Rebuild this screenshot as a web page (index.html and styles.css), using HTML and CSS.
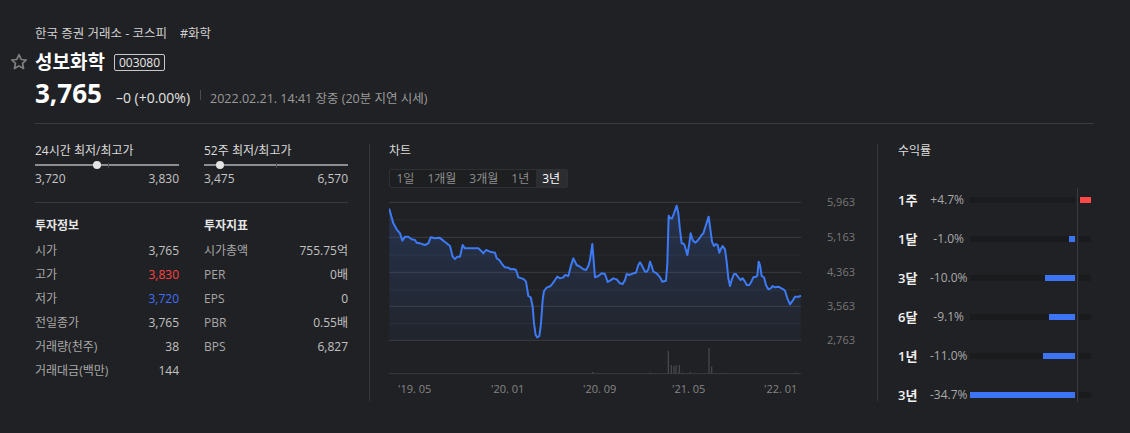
FILE: index.html
```html
<!DOCTYPE html>
<html lang="ko">
<head>
<meta charset="utf-8">
<title>성보화학</title>
<link rel="stylesheet" href="styles.css">
</head>
<body>
<div class="page">
  <header class="head">
    <div class="market"><span>한국 증권 거래소 - 코스피</span><span class="tag">#화학</span></div>
    <div class="name-row">
      <svg class="star" viewBox="0 0 24 24" width="18" height="18"><polygon points="12,2.2 14.9,8.6 21.7,9.3 16.7,13.9 18.1,20.7 12,17.2 5.9,20.7 7.3,13.9 2.3,9.3 9.1,8.6" fill="none" stroke="#808080" stroke-width="2.2" stroke-linejoin="round"/></svg>
      <h1 class="name">성보화학</h1>
      <span class="code">003080</span>
    </div>
    <div class="price-row">
      <span class="price">3,765</span>
      <span class="chg">–0 (+0.00%)</span>
      <span class="sep"></span>
      <span class="time">2022.02.21. 14:41 장중 (20분 지연 시세)</span>
    </div>
  </header>
  <div class="rule"></div>
  <main class="body">
    <section class="stats">
      <div class="range">
        <div class="sec-title">24시간 최저/최고가</div>
        <div class="slider"><span class="tick" style="left:73px"></span><span class="dot" style="left:62px"></span></div>
        <div class="range-vals"><span>3,720</span><span>3,830</span></div>
      </div>
      <div class="range">
        <div class="sec-title">52주 최저/최고가</div>
        <div class="slider"><span class="tick" style="left:72px"></span><span class="dot" style="left:16px"></span></div>
        <div class="range-vals"><span>3,475</span><span>6,570</span></div>
      </div>
      <div class="divider"></div>
      <div class="info">
        <div class="info-title">투자정보</div>
        <div class="row"><span class="lbl">시가</span><span class="val">3,765</span></div>
        <div class="row"><span class="lbl">고가</span><span class="val up">3,830</span></div>
        <div class="row"><span class="lbl">저가</span><span class="val down">3,720</span></div>
        <div class="row"><span class="lbl">전일종가</span><span class="val">3,765</span></div>
        <div class="row"><span class="lbl">거래량(천주)</span><span class="val">38</span></div>
        <div class="row"><span class="lbl">거래대금(백만)</span><span class="val">144</span></div>
      </div>
      <div class="info">
        <div class="info-title">투자지표</div>
        <div class="row"><span class="lbl">시가총액</span><span class="val">755.75억</span></div>
        <div class="row"><span class="lbl">PER</span><span class="val">0배</span></div>
        <div class="row"><span class="lbl">EPS</span><span class="val">0</span></div>
        <div class="row"><span class="lbl">PBR</span><span class="val">0.55배</span></div>
        <div class="row"><span class="lbl">BPS</span><span class="val">6,827</span></div>
      </div>
    </section>
    <div class="vline"></div>
    <section class="chart">
      <div class="sec-title">차트</div>
      <div class="tabs">
        <span class="tab">1일</span>
        <span class="tab">1개월</span>
        <span class="tab">3개월</span>
        <span class="tab">1년</span>
        <span class="tab active">3년</span>
      </div>
      <div class="plot-wrap">
        <svg class="plot" width="412" height="181" viewBox="27 15 1236 543" preserveAspectRatio="none">
          <defs>
            <linearGradient id="area" x1="0" y1="0" x2="0" y2="1">
              <stop offset="0" stop-color="#3d7af5" stop-opacity="0.2"/>
              <stop offset="1" stop-color="#3d7af5" stop-opacity="0.04"/>
            </linearGradient>
          </defs>
          <g stroke="#2b2c30" stroke-width="3">
            <line x1="27" y1="90" x2="1263" y2="90"/>
            <line x1="27" y1="195" x2="1263" y2="195"/>
            <line x1="27" y1="300" x2="1263" y2="300"/>
            <line x1="27" y1="400" x2="1263" y2="400"/>
          </g>
          <g stroke="#3b3c40" stroke-width="3">
            <line x1="27" y1="37" x2="1263" y2="37"/>
            <line x1="27" y1="142" x2="1263" y2="142"/>
            <line x1="27" y1="247" x2="1263" y2="247"/>
            <line x1="27" y1="349" x2="1263" y2="349"/>
            <line x1="27" y1="451" x2="1263" y2="451"/>
            <line x1="27" y1="551" x2="1263" y2="551"/>
          </g>
          <g fill="#46474b">
            <rect x="636" y="546" width="4" height="5"/>
            <rect x="809" y="548" width="4" height="3"/>
            <rect x="863" y="483" width="4" height="68"/>
            <rect x="872" y="525" width="4" height="26"/>
            <rect x="880" y="528" width="4" height="23"/>
            <rect x="886" y="526" width="4" height="25"/>
            <rect x="896" y="525" width="4" height="26"/>
            <rect x="905" y="548" width="4" height="3"/>
            <rect x="928" y="546" width="4" height="5"/>
            <rect x="985" y="474" width="4" height="77"/>
            <rect x="993" y="530" width="4" height="21"/>
            <rect x="1023" y="549" width="4" height="2"/>
            <rect x="1245" y="548" width="4" height="3"/>
          </g>
          <path fill="url(#area)" d="M28,58 L40,100 L50,118 L60,130 L67,152 L75,140 L85,140 L95,148 L105,150 L110,158 L120,160 L135,165 L145,160 L152,142 L165,145 L178,143 L190,152 L200,160 L210,168 L218,200 L225,207 L232,200 L240,200 L248,165 L255,175 L265,175 L280,175 L295,175 L303,182 L310,190 L318,180 L330,185 L345,188 L350,205 L358,210 L368,225 L375,232 L385,233 L392,238 L400,237 L408,240 L415,262 L425,265 L432,268 L438,275 L445,318 L452,322 L458,350 L462,400 L467,435 L472,442 L478,438 L483,400 L488,330 L492,303 L500,293 L512,288 L518,280 L525,270 L532,260 L540,265 L550,262 L555,255 L565,258 L572,230 L580,205 L590,225 L600,230 L610,238 L618,240 L625,228 L630,210 L637,162 L640,200 L645,262 L655,258 L665,250 L675,252 L683,276 L690,272 L700,265 L710,268 L720,280 L728,282 L735,270 L740,252 L748,255 L760,250 L768,248 L775,225 L780,217 L785,225 L790,235 L795,245 L800,245 L805,238 L810,215 L815,228 L820,245 L830,250 L840,262 L847,275 L858,272 L862,220 L866,77 L870,85 L876,85 L882,70 L890,47 L895,70 L900,120 L905,160 L912,162 L915,170 L922,195 L928,160 L932,130 L938,150 L945,158 L950,155 L958,145 L965,135 L970,130 L978,105 L986,80 L990,110 L996,155 L1002,168 L1008,162 L1013,165 L1018,188 L1022,178 L1028,168 L1035,178 L1040,215 L1045,265 L1050,288 L1055,270 L1062,252 L1068,252 L1075,262 L1082,270 L1088,265 L1095,275 L1100,285 L1108,285 L1114,275 L1120,262 L1128,260 L1132,257 L1136,215 L1140,225 L1145,258 L1152,262 L1158,285 L1165,298 L1172,295 L1178,288 L1185,292 L1195,290 L1210,298 L1215,302 L1222,325 L1230,343 L1238,332 L1245,320 L1255,320 L1262,318 L1262,451 L28,451 Z"/>
          <path fill="none" stroke="#3d7af5" stroke-width="6" stroke-linejoin="round" stroke-linecap="round" d="M28,58 L40,100 L50,118 L60,130 L67,152 L75,140 L85,140 L95,148 L105,150 L110,158 L120,160 L135,165 L145,160 L152,142 L165,145 L178,143 L190,152 L200,160 L210,168 L218,200 L225,207 L232,200 L240,200 L248,165 L255,175 L265,175 L280,175 L295,175 L303,182 L310,190 L318,180 L330,185 L345,188 L350,205 L358,210 L368,225 L375,232 L385,233 L392,238 L400,237 L408,240 L415,262 L425,265 L432,268 L438,275 L445,318 L452,322 L458,350 L462,400 L467,435 L472,442 L478,438 L483,400 L488,330 L492,303 L500,293 L512,288 L518,280 L525,270 L532,260 L540,265 L550,262 L555,255 L565,258 L572,230 L580,205 L590,225 L600,230 L610,238 L618,240 L625,228 L630,210 L637,162 L640,200 L645,262 L655,258 L665,250 L675,252 L683,276 L690,272 L700,265 L710,268 L720,280 L728,282 L735,270 L740,252 L748,255 L760,250 L768,248 L775,225 L780,217 L785,225 L790,235 L795,245 L800,245 L805,238 L810,215 L815,228 L820,245 L830,250 L840,262 L847,275 L858,272 L862,220 L866,77 L870,85 L876,85 L882,70 L890,47 L895,70 L900,120 L905,160 L912,162 L915,170 L922,195 L928,160 L932,130 L938,150 L945,158 L950,155 L958,145 L965,135 L970,130 L978,105 L986,80 L990,110 L996,155 L1002,168 L1008,162 L1013,165 L1018,188 L1022,178 L1028,168 L1035,178 L1040,215 L1045,265 L1050,288 L1055,270 L1062,252 L1068,252 L1075,262 L1082,270 L1088,265 L1095,275 L1100,285 L1108,285 L1114,275 L1120,262 L1128,260 L1132,257 L1136,215 L1140,225 L1145,258 L1152,262 L1158,285 L1165,298 L1172,295 L1178,288 L1185,292 L1195,290 L1210,298 L1215,302 L1222,325 L1230,343 L1238,332 L1245,320 L1255,320 L1262,318"/>
        </svg>
        <div class="y-axis">
          <span style="top:0px">5,963</span>
          <span style="top:35px">5,163</span>
          <span style="top:70px">4,363</span>
          <span style="top:104px">3,563</span>
          <span style="top:138px">2,763</span>
        </div>
      </div>
      <div class="x-axis">
        <span style="left:9px">'19. 05</span>
        <span style="left:102px">'20. 01</span>
        <span style="left:194px">'20. 09</span>
        <span style="left:283px">'21. 05</span>
        <span style="left:375px">'22. 01</span>
      </div>
    </section>
    <div class="vline"></div>
    <section class="returns">
      <div class="sec-title">수익률</div>
      <div class="ret-list">
        <div class="ret-row"><span class="period">1주</span><span class="pct">+4.7%</span><div class="bars"><div class="neg"></div><div class="gap"></div><div class="pos"><span class="fill-pos" style="width:11px"></span></div></div></div>
        <div class="ret-row"><span class="period">1달</span><span class="pct">-1.0%</span><div class="bars"><div class="neg"><span class="fill-neg" style="width:6px"></span></div><div class="gap"></div><div class="pos"></div></div></div>
        <div class="ret-row"><span class="period">3달</span><span class="pct">-10.0%</span><div class="bars"><div class="neg"><span class="fill-neg" style="width:30px"></span></div><div class="gap"></div><div class="pos"></div></div></div>
        <div class="ret-row"><span class="period">6달</span><span class="pct">-9.1%</span><div class="bars"><div class="neg"><span class="fill-neg" style="width:26px"></span></div><div class="gap"></div><div class="pos"></div></div></div>
        <div class="ret-row"><span class="period">1년</span><span class="pct">-11.0%</span><div class="bars"><div class="neg"><span class="fill-neg" style="width:32px"></span></div><div class="gap"></div><div class="pos"></div></div></div>
        <div class="ret-row"><span class="period">3년</span><span class="pct">-34.7%</span><div class="bars"><div class="neg"><span class="fill-neg" style="width:105px"></span></div><div class="gap"></div><div class="pos"></div></div></div>
      </div>
    </section>
  </main>
</div>
</body>
</html>
```

FILE: styles.css
```css
* { box-sizing: border-box; margin: 0; padding: 0; }

html, body {
  background: #202124;
}

body {
  font-family: "Open Sans", "Noto Sans CJK KR", sans-serif;
  color: #cfcfcf;
  font-size: 12px;
  line-height: 14px;
}

.page {
  width: 1130px;
  height: 433px;
  padding: 26px 36px 0 35px;
  overflow: hidden;
}

/* header */
.market {
  font-size: 12.5px;
  line-height: 16px;
  color: #d2d2d2;
  display: flex;
}
.market .tag { margin-left: 13px; }

.name-row {
  margin-top: 8px;
  height: 24px;
  display: flex;
  align-items: center;
}
.star {
  margin-left: -25px;
  margin-right: 7px;
  flex: none;
}
.name {
  font-size: 19px;
  line-height: 24px;
  font-weight: 700;
  color: #ffffff;
}
.code {
  margin-left: 9px;
  font-size: 12px;
  line-height: 15px;
  padding: 0 4px;
  border: 1px solid #c8c8c8;
  border-radius: 2px;
  color: #e8e8e8;
}

.price-row {
  margin-top: 3px;
  height: 32px;
  display: flex;
  align-items: baseline;
}
.price {
  font-size: 26px;
  line-height: 32px;
  font-weight: 700;
  color: #ffffff;
}
.chg {
  margin-left: 14px;
  font-size: 14px;
  color: #e2e2e2;
}
.sep {
  align-self: center;
  width: 1px;
  height: 10px;
  background: #4a4b4f;
  margin: 4px 9px 0 10px;
}
.time {
  font-size: 12.5px;
  color: #9a9a9a;
}

.rule {
  margin-top: 14px;
  height: 1px;
  background: #393a3e;
}

/* body */
.body {
  display: flex;
  padding-top: 20px;
}

.vline {
  width: 1px;
  height: 257px;
  background: #36373b;
  flex: none;
}

.sec-title {
  font-size: 12px;
  line-height: 14px;
  color: #dcdcdc;
}

/* stats */
.stats {
  width: 313px;
  flex: none;
  display: grid;
  grid-template-columns: 144px 144px;
  column-gap: 25px;
  align-content: start;
  margin-right: 21px;
}
.slider {
  position: relative;
  margin-top: 3px;
  height: 8px;
}
.slider::before {
  content: "";
  position: absolute;
  left: 0;
  right: 0;
  top: 3px;
  height: 2px;
  background: #8d8d8d;
}
.slider .tick {
  position: absolute;
  top: 2px;
  width: 1px;
  height: 5px;
  background: #4e4f53;
}
.slider .dot {
  position: absolute;
  top: 0;
  width: 8px;
  height: 8px;
  margin-left: -4px;
  border-radius: 50%;
  background: #e4e4e4;
}
.range-vals {
  margin-top: 3px;
  display: flex;
  justify-content: space-between;
  color: #c4c4c4;
}
.divider {
  grid-column: 1 / 3;
  height: 1px;
  background: #393a3e;
  margin-top: 16px;
}
.info {
  margin-top: 16px;
}
.info-title {
  font-size: 12px;
  line-height: 14px;
  font-weight: 700;
  color: #e6e6e6;
  margin-bottom: 6px;
}
.row {
  height: 24px;
  display: flex;
  align-items: center;
  justify-content: space-between;
}
.lbl { color: #a8a8a8; }
.val { color: #c2c2c2; }
.val.up { color: #ff4242; }
.val.down { color: #3e70f6; }

/* chart */
.chart {
  width: 467px;
  flex: none;
  margin-left: 19px;
  margin-right: 21px;
}
.tabs {
  margin-top: 11px;
  display: inline-flex;
  border: 1px solid #2f3034;
  background: #1d1e20;
  border-radius: 2px;
}
.tab {
  padding: 0 6.5px;
  line-height: 17px;
  color: #8d8d8d;
}
.tab.active {
  background: #2c2d31;
  color: #ffffff;
}
.plot-wrap {
  position: relative;
  margin-top: 7px;
  height: 181px;
}
.plot { display: block; }
.y-axis span {
  position: absolute;
  right: 1px;
  font-size: 11px;
  line-height: 14px;
  color: #787878;
}
.x-axis {
  position: relative;
  margin-top: 6px;
  height: 14px;
}
.x-axis span {
  position: absolute;
  top: 0;
  font-size: 11px;
  line-height: 14px;
  color: #858585;
  white-space: nowrap;
}

/* returns */
.returns {
  flex: 1;
  padding-left: 20px;
}
.ret-list {
  position: relative;
  margin-top: 22px;
}
.ret-list::after {
  content: "";
  position: absolute;
  left: 179px;
  top: 8px;
  bottom: 12px;
  width: 1px;
  background: #3a3b3f;
}
.ret-row {
  height: 39px;
  display: grid;
  grid-template-columns: 32px 34px 127px;
  align-items: center;
}
.period {
  font-size: 13px;
  font-weight: 600;
  color: #f0f0f0;
}
.pct {
  text-align: right;
  color: #a9a9a9;
  white-space: nowrap;
}
.bars {
  margin-left: 6px;
  display: flex;
  height: 6px;
}
.neg {
  flex: none;
  width: 105px;
  height: 6px;
  background: #1a1b1d;
  display: flex;
  justify-content: flex-end;
}
.gap { flex: none; width: 4px; }
.pos {
  flex: none;
  width: 12px;
  height: 6px;
  background: #1a1b1d;
  display: flex;
  justify-content: flex-end;
}
.fill-neg { height: 6px; background: #3d74f6; }
.fill-pos { height: 6px; background: #ff4848; }
```
